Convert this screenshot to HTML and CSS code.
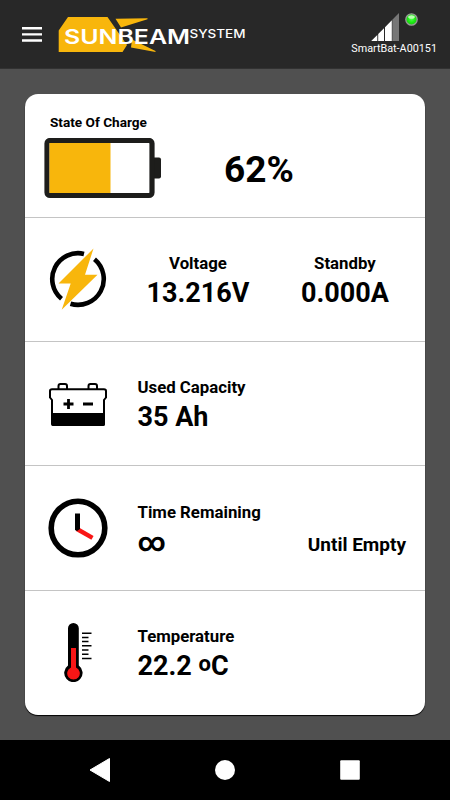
FILE: index.html
```html
<!DOCTYPE html>
<html lang="en">
  <head>
    <meta charset="utf-8">
    <meta name="viewport" content="width=device-width, initial-scale=1">
    <title>Sunbeam System</title>
    <link rel="stylesheet" href="styles.css">
  </head>
  <body>
    <header class="header">
      <svg class="menu" width="20" height="15" viewBox="0 0 20 15">
        <path d="M0 1.3h20M0 7.4h20M0 13.5h20" stroke="#fff" stroke-width="2.4"/>
      </svg>
      <svg class="logo" width="190" height="38" viewBox="0 0 190 38">
        <path fill="#f8b60c" d="M10 3H49.500L62 21 69 31 64.500 38H0.700V16.500Z M57.500 4.800 89.500 4.200V5.200L63 13.500Z M74 25.500 97.500 37V38L73 33.500Z"/>
        <text class="logo-name" x="6" y="30.300" textLength="126" lengthAdjust="spacingAndGlyphs">SUNBEAM</text>
        <text class="logo-sub" x="131.500" y="24" textLength="56" lengthAdjust="spacingAndGlyphs">SYSTEM</text>
      </svg>
      <div class="device">
        <svg class="signal" width="50" height="30" viewBox="0 0 50 30">
          <defs>
            <radialGradient id="led" cx="50%" cy="45%" r="50%">
              <stop offset="0" stop-color="#5f5"/>
              <stop offset="0.6" stop-color="#19ee10"/>
              <stop offset="1" stop-color="#22c41a"/>
            </radialGradient>
          </defs>
          <path d="M1.200 28 7.300 22V28ZM8.200 21 14 15.200V28H8.200ZM15 14.200 21.800 7.300V28H15Z" fill="#fff"/>
          <path d="M22.300 6.800 29 0V28H22.300Z" fill="#777"/>
          <circle cx="41.500" cy="6.500" r="5.700" fill="url(#led)" stroke="#999" stroke-width="1.300"/>
          <ellipse cx="41.500" cy="4" rx="3.300" ry="1.800" fill="#b9ffb0"/>
        </svg>
        <span class="device-name">SmartBat-A00151</span>
      </div>
    </header>

    <main class="content">
      <div class="card">
        <section class="row row--charge">
          <div class="charge">
            <span class="charge-label">State Of Charge</span>
            <svg width="118" height="61" viewBox="0 0 118 61">
              <rect x="106" y="19.500" width="11" height="21" rx="2" fill="#1d1d1b"/>
              <rect x="3" y="2.500" width="105" height="55" rx="3" fill="#fff" stroke="#1d1d1b" stroke-width="5.200"/>
              <rect x="5.500" y="5" width="61" height="50" fill="#f8b60c"/>
            </svg>
          </div>
          <div class="percent">62%</div>
        </section>

        <section class="row">
          <svg class="icon" width="60" height="64" viewBox="0 0 60 64">
            <path d="M36 6.900A25.800 25.800 0 0 0 13.500 51.800M46.500 12.200A25.800 25.800 0 0 1 22.500 56.700" fill="none" stroke="#000" stroke-width="4.600"/>
            <path d="M45.500 1.500 37 27.800H49.500L13.700 62.800 22.700 36.500H10.500Z" fill="#f8b60c"/>
          </svg>
          <div class="readings">
            <div class="reading reading--voltage">
              <span class="label">Voltage</span>
              <span class="value">13.216V</span>
            </div>
            <div class="reading reading--current">
              <span class="label">Standby</span>
              <span class="value">0.000A</span>
            </div>
          </div>
        </section>

        <section class="row">
          <svg class="icon icon--battery" width="60" height="46" viewBox="0 0 60 46">
            <path d="M10.500 7V4Q10.500 2 12.500 2H17Q19 2 19 4V7M40.500 7V4Q40.500 2 42.500 2H47Q49 2 49 4V7" fill="none" stroke="#000" stroke-width="2"/>
            <path d="M4 7.200H56Q58 7.200 58 9V15.500L56 18V42Q56 43 55 43H5Q4 43 4 42V18L2 15.500V9Q2 7.200 4 7.200Z" fill="#fff" stroke="#000" stroke-width="2"/>
            <path d="M3.500 31H57V42Q57 44 55 44H5.500Q3.500 44 3.500 42Z"/>
            <path d="M15.500 22H25.500M20.500 17V27M35 22H45" stroke="#000" stroke-width="2.800"/>
          </svg>
          <div class="detail">
            <span class="label">Used Capacity</span>
            <span class="value">35 Ah</span>
          </div>
        </section>

        <section class="row">
          <svg class="icon" width="60" height="60" viewBox="0 0 60 60">
            <circle cx="30" cy="30" r="26.800" fill="#fff" stroke="#000" stroke-width="5.600"/>
            <path d="M29 31 44.500 39.800" stroke="#f91616" stroke-width="4.400"/>
            <path d="M27 15.500H32V31L29 33 27 32Z"/>
          </svg>
          <div class="detail">
            <span class="label">Time Remaining</span>
            <span class="value">∞</span>
          </div>
          <span class="status">Until Empty</span>
        </section>

        <section class="row">
          <svg class="icon" width="60" height="60" viewBox="0 0 60 60">
            <path d="M20 6.300A5.400 5.400 0 0 1 30.800 6.300V43.500A9.200 9.200 0 1 1 20 43.500Z"/>
            <path d="M23 26H28V45.500A6.300 6.300 0 1 1 23 45.500Z" fill="#f91616"/>
            <path d="M34 11.300H43.500M34 15.500H40.500M34 19.500H40.500M34 23.700H43.500M34 28H40.500M34 32.300H40.500M34 36.500H43.500" stroke="#000" stroke-width="1.600"/>
          </svg>
          <div class="detail">
            <span class="label">Temperature</span>
            <span class="value">22.2 <span class="degree">o</span>C</span>
          </div>
        </section>
      </div>
    </main>

    <nav class="navbar">
      <svg width="22" height="26" viewBox="0 0 22 26"><path d="M1 13 20.500 1.500V24.500Z" fill="#fff" stroke="#fff" stroke-linejoin="round"/></svg>
      <svg width="22" height="22" viewBox="0 0 22 22"><circle cx="11" cy="11" r="10" fill="#fff"/></svg>
      <svg width="22" height="22" viewBox="0 0 22 22"><rect x="1.200" y="1.200" width="19.600" height="19.600" rx="1" fill="#fff"/></svg>
    </nav>
  </body>
</html>
```
FILE: styles.css
```css
* { box-sizing: border-box; }

body {
  display: flex;
  flex-direction: column;
  width: 450px;
  height: 800px;
  margin: 0;
  background: #505050;
  color: #000;
  font-family: Roboto, "Liberation Sans", sans-serif;
}

svg { display: block; }

.header {
  display: flex;
  align-items: flex-start;
  height: 69px;
  background: #282828;
  border-bottom: 1px solid #323232;
}

.menu { margin: 27px 0 0 22px; }
.logo { margin: 14px 0 0 16px; }

.logo-name,
.logo-sub {
  fill: #fff;
  font-family: Inter, sans-serif;
}
.logo-name { font-size: 19.5px; font-weight: 600; }
.logo-sub { font-size: 11.5px; font-weight: 500; }

.device {
  display: flex;
  flex-direction: column;
  align-items: flex-end;
  margin-left: auto;
  padding: 13px 13px 0 0;
}
.signal { margin-right: 17px; }
.device-name {
  color: #fff;
  font-size: 10.8px;
  line-height: 11px;
}

.content {
  flex: 1;
  padding: 25px;
}

.card {
  display: flex;
  flex-direction: column;
  height: 621px;
  overflow: hidden;
  background: #fff;
  border-radius: 13px;
  box-shadow: 0 1px 1px #000;
}

.row {
  display: flex;
  height: 124.3px;
  align-items: center;
  padding: 0 19px 0 23px;
  border-bottom: 1px solid #c4c4c4;
}
.row:last-child { border-bottom: none; }

.row--charge {
  height: 123.8px;
  align-items: flex-start;
  padding-left: 19px;
}

.icon { margin-top: -1px; }
.icon--battery { margin-top: 2px; }

.charge-label {
  display: block;
  padding: 20px 0 8px 6px;
  font-size: 13.6px;
  font-weight: 700;
  line-height: 16px;
}

.percent {
  padding: 54px 0 0 62px;
  font-size: 37px;
  font-weight: 700;
  line-height: 44px;
}

.readings { display: flex; }
.detail,
.reading {
  display: flex;
  flex-direction: column;
}
.detail { padding-left: 29.5px; }
.reading { align-items: center; }
.reading--voltage { margin-left: 38.5px; }
.reading--current { margin-left: 51.5px; }

.readings,
.detail { padding-top: 3px; }

.label {
  font-size: 16.8px;
  font-weight: 700;
  line-height: 22px;
}
.value {
  padding-top: 2px;
  font-size: 27px;
  font-weight: 700;
  line-height: 34px;
}
.degree {
  font-size: 22px;
  vertical-align: 4px;
  line-height: 1;
}

.status {
  margin: 33px 0 0 auto;
  font-size: 19px;
  font-weight: 700;
  line-height: 22px;
}

.navbar {
  display: flex;
  align-items: center;
  justify-content: space-between;
  height: 60px;
  padding: 0 89px;
  background: #000;
}
```
